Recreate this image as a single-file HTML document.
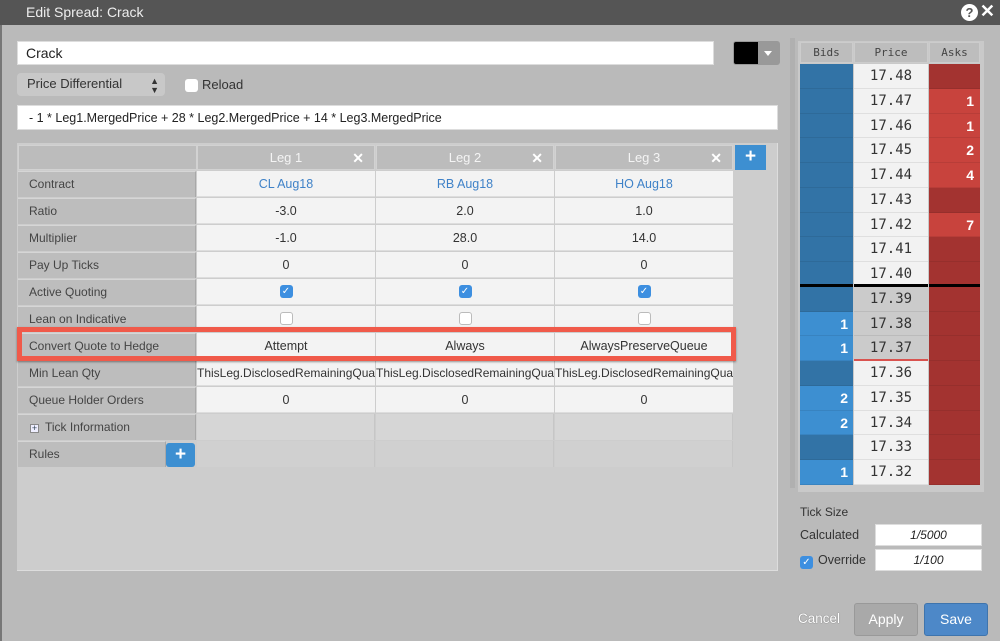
<!DOCTYPE html>
<html><head><meta charset="utf-8"><style>
*{box-sizing:border-box;margin:0;padding:0}
body{width:1000px;height:641px;overflow:hidden;background:#bababa;font-family:"Liberation Sans",Arial,sans-serif;position:relative;color:#333}
.a{position:absolute}
.title{left:0;top:0;width:1000px;height:25px;background:#555;color:#eee;font-size:14px;line-height:25px;padding-left:26px}
.inp{background:#fff;border:1px solid #ddd;font-size:13px;color:#222}
.lbl{position:absolute;left:18px;width:178px;height:26px;background:#bdbdbd;border-top:1px solid #d6d6d6;border-right:1px solid #a8a8a8;font-size:12px;line-height:25px;padding-left:11px;color:#444}
.c{position:absolute;width:178px;height:26px;background:#f3f3f3;border-bottom:1px solid #ddd;font-size:12.5px;line-height:26px;text-align:center;color:#333;overflow:hidden;white-space:nowrap}
.h{position:absolute;top:145px;width:178px;height:25px;background:#bcbcbc;border:1px solid #d2d2d2;color:#f4f4f4;font-size:13px;line-height:24px;text-align:center}
.h b{position:absolute;right:10px;top:0;font-size:14px;color:#fff}
.blue{color:#3f82c8}
.cb{display:inline-block;width:13px;height:13px;border-radius:3px;vertical-align:middle;margin-top:-2px}
.on{background:#3d8fe0;color:#fff;font-size:10px;line-height:13px}
.off{background:#fff;border:1px solid #bbb}
.e{position:absolute;width:178px;height:26px;background:#d6d6d6;border-right:1px solid #c6c6c6}
.lad{position:absolute;height:24.75px;font-size:14px;line-height:24px;font-family:"DejaVu Sans Mono","Liberation Mono",monospace;border-bottom:1px solid rgba(0,0,0,.08)}
.bd{left:800px;width:53px;background:#3273a6;color:#fff;text-align:right;padding-right:5px;font-family:"Liberation Sans",sans-serif;font-weight:bold}
.bl{background:#3d8fd1}
.pr{left:854px;width:74px;background:#f2f2f2;text-align:center;color:#333}
.pg{background:#cbcbcb}
.ak{left:929px;width:51px;background:#a33330;color:#fff;text-align:right;padding-right:6px;font-family:"Liberation Sans",sans-serif;font-weight:bold}
.al{background:#c8433d}
.blk{border-bottom:3px solid #000}
</style></head><body>
<div class="a" style="left:0;top:25px;width:2px;height:616px;background:#777"></div>
<div class="a title">Edit Spread: Crack</div>
<div class="a" style="right:22px;top:4px;width:17px;height:17px;border-radius:50%;background:#fff;color:#555;font-size:13px;font-weight:bold;text-align:center;line-height:17px">?</div>
<div class="a" style="right:5px;top:1px;color:#fff;font-size:18px;font-weight:bold">✕</div>

<div class="a inp" style="left:17px;top:41px;width:697px;height:24px;line-height:22px;padding-left:8px;font-size:14px">Crack</div>
<div class="a" style="left:733px;top:41px;width:47px;height:24px;border:1px solid #999;border-radius:3px;background:#999;overflow:hidden"><div style="width:24px;height:22px;background:#000"></div><div class="a" style="left:30px;top:9px;border:4px solid transparent;border-top:5px solid #fff"></div></div>
<div class="a" style="left:17px;top:73px;width:148px;height:23px;background:#c8c8c8;border-radius:4px;font-size:13px;line-height:22px;padding-left:10px;color:#333">Price Differential<span class="a" style="right:6px;font-size:9px;line-height:9px;top:4px">▲<br>▼</span></div>
<div class="a" style="left:185px;top:79px;width:13px;height:13px;background:#fff;border-radius:3px"></div>
<div class="a" style="left:202px;top:77px;font-size:13px;color:#333">Reload</div>
<div class="a inp" style="left:17px;top:105px;width:761px;height:25px;line-height:24px;padding-left:11px;font-size:12.5px">- 1 * Leg1.MergedPrice + 28 * Leg2.MergedPrice + 14 * Leg3.MergedPrice</div>

<div class="a" style="left:17px;top:143px;width:761px;height:428px;background:#cdcdcd;border-right:1px solid #ddd;border-bottom:1px solid #ddd"></div>
<div class="a" style="left:18px;top:145px;width:179px;height:25px;background:#bcbcbc;border:1px solid #d2d2d2"></div>
<div class="h" style="left:197px">Leg 1<b>✕</b></div>
<div class="h" style="left:376px">Leg 2<b>✕</b></div>
<div class="h" style="left:555px">Leg 3<b>✕</b></div>
<div class="a" style="left:735px;top:145px;width:31px;height:25px;background:#3d8fd1;color:#fff;font-weight:bold;font-size:19px;text-align:center;line-height:24px">+</div>

<div class="lbl" style="top:171px">Contract</div>
<div class="lbl" style="top:198px">Ratio</div>
<div class="lbl" style="top:225px">Multiplier</div>
<div class="lbl" style="top:252px">Pay Up Ticks</div>
<div class="lbl" style="top:279px">Active Quoting</div>
<div class="lbl" style="top:306px">Lean on Indicative</div>
<div class="lbl" style="top:333px">Convert Quote to Hedge</div>
<div class="lbl" style="top:360px">Min Lean Qty</div>
<div class="lbl" style="top:387px">Queue Holder Orders</div>
<div class="lbl" style="top:414px;padding-left:12px"><span style="display:inline-block;width:9px;height:9px;border:1px solid #888;background:#eef;font-size:9px;line-height:7px;text-align:center;color:#345;margin-right:6px">+</span>Tick Information</div>
<div class="lbl" style="top:441px;width:148px">Rules</div>
<div class="a" style="left:166px;top:443px;width:29px;height:24px;background:#3d8fd1;border-radius:3px;color:#fff;font-weight:bold;font-size:19px;text-align:center;line-height:23px">+</div>

<div class="c blue" style="left:197px;top:171px">CL Aug18</div>
<div class="c blue" style="left:376px;top:171px">RB Aug18</div>
<div class="c blue" style="left:555px;top:171px">HO Aug18</div>
<div class="c" style="left:197px;top:198px">-3.0</div><div class="c" style="left:376px;top:198px">2.0</div><div class="c" style="left:555px;top:198px">1.0</div>
<div class="c" style="left:197px;top:225px">-1.0</div><div class="c" style="left:376px;top:225px">28.0</div><div class="c" style="left:555px;top:225px">14.0</div>
<div class="c" style="left:197px;top:252px">0</div><div class="c" style="left:376px;top:252px">0</div><div class="c" style="left:555px;top:252px">0</div>
<div class="c" style="left:197px;top:279px"><span class="cb on">✓</span></div><div class="c" style="left:376px;top:279px"><span class="cb on">✓</span></div><div class="c" style="left:555px;top:279px"><span class="cb on">✓</span></div>
<div class="c" style="left:197px;top:306px"><span class="cb off"></span></div><div class="c" style="left:376px;top:306px"><span class="cb off"></span></div><div class="c" style="left:555px;top:306px"><span class="cb off"></span></div>
<div class="c" style="left:197px;top:333px">Attempt</div><div class="c" style="left:376px;top:333px">Always</div><div class="c" style="left:555px;top:333px">AlwaysPreserveQueue</div>
<div class="c" style="left:197px;top:360px;text-align:left;font-size:12px">ThisLeg.DisclosedRemainingQuantity</div><div class="c" style="left:376px;top:360px;text-align:left;font-size:12px">ThisLeg.DisclosedRemainingQuantity</div><div class="c" style="left:555px;top:360px;text-align:left;font-size:12px">ThisLeg.DisclosedRemainingQuantity</div>
<div class="c" style="left:197px;top:387px">0</div><div class="c" style="left:376px;top:387px">0</div><div class="c" style="left:555px;top:387px">0</div>
<div class="e" style="left:197px;top:414px"></div><div class="e" style="left:376px;top:414px"></div><div class="e" style="left:555px;top:414px"></div>
<div class="e" style="left:197px;top:441px;background:#d0d0d0"></div><div class="e" style="left:376px;top:441px;background:#d0d0d0"></div><div class="e" style="left:555px;top:441px;background:#d0d0d0"></div>
<div class="a" style="left:17px;top:327px;width:719px;height:34px;border:5px solid #f05a4a;box-shadow:0 1px 2px rgba(0,0,0,.4)"></div>

<div class="a" style="left:790px;top:38px;width:5px;height:450px;background:#b0b0b0"></div>
<div class="a" style="left:798px;top:41px;width:186px;height:451px;background:#c9c9c9"></div>
<div class="a" style="left:800px;top:42px;width:53px;height:21px;background:#bdbdbd;border:1px solid #ccc;font-size:11px;text-align:center;line-height:19px;font-family:'DejaVu Sans Mono',monospace;color:#444">Bids</div>
<div class="a" style="left:854px;top:42px;width:74px;height:21px;background:#bdbdbd;border:1px solid #ccc;font-size:11px;text-align:center;line-height:19px;font-family:'DejaVu Sans Mono',monospace;color:#444">Price</div>
<div class="a" style="left:929px;top:42px;width:51px;height:21px;background:#bdbdbd;border:1px solid #ccc;font-size:11px;text-align:center;line-height:19px;font-family:'DejaVu Sans Mono',monospace;color:#444">Asks</div>

<div class="lad bd" style="top:64px"></div><div class="lad pr" style="top:64px">17.48</div><div class="lad ak" style="top:64px"></div>
<div class="lad bd" style="top:88.75px"></div><div class="lad pr" style="top:88.75px">17.47</div><div class="lad ak al" style="top:88.75px">1</div>
<div class="lad bd" style="top:113.5px"></div><div class="lad pr" style="top:113.5px">17.46</div><div class="lad ak al" style="top:113.5px">1</div>
<div class="lad bd" style="top:138.25px"></div><div class="lad pr" style="top:138.25px">17.45</div><div class="lad ak al" style="top:138.25px">2</div>
<div class="lad bd" style="top:163px"></div><div class="lad pr" style="top:163px">17.44</div><div class="lad ak al" style="top:163px">4</div>
<div class="lad bd" style="top:187.75px"></div><div class="lad pr" style="top:187.75px">17.43</div><div class="lad ak" style="top:187.75px"></div>
<div class="lad bd" style="top:212.5px"></div><div class="lad pr" style="top:212.5px">17.42</div><div class="lad ak al" style="top:212.5px">7</div>
<div class="lad bd" style="top:237.25px"></div><div class="lad pr" style="top:237.25px">17.41</div><div class="lad ak" style="top:237.25px"></div>
<div class="lad bd blk" style="top:262px"></div><div class="lad pr blk" style="top:262px">17.40</div><div class="lad ak blk" style="top:262px"></div>
<div class="lad bd" style="top:286.75px"></div><div class="lad pr pg" style="top:286.75px">17.39</div><div class="lad ak" style="top:286.75px"></div>
<div class="lad bd bl" style="top:311.5px">1</div><div class="lad pr pg" style="top:311.5px">17.38</div><div class="lad ak" style="top:311.5px"></div>
<div class="lad bd bl" style="top:336.25px">1</div><div class="lad pr pg" style="top:336.25px;border-bottom:2px solid #d9534f">17.37</div><div class="lad ak" style="top:336.25px"></div>
<div class="lad bd" style="top:361px"></div><div class="lad pr" style="top:361px">17.36</div><div class="lad ak" style="top:361px"></div>
<div class="lad bd bl" style="top:385.75px">2</div><div class="lad pr" style="top:385.75px">17.35</div><div class="lad ak" style="top:385.75px"></div>
<div class="lad bd bl" style="top:410.5px">2</div><div class="lad pr" style="top:410.5px">17.34</div><div class="lad ak" style="top:410.5px"></div>
<div class="lad bd" style="top:435.25px"></div><div class="lad pr" style="top:435.25px">17.33</div><div class="lad ak" style="top:435.25px"></div>
<div class="lad bd bl" style="top:460px">1</div><div class="lad pr" style="top:460px">17.32</div><div class="lad ak" style="top:460px"></div>

<div class="a" style="left:800px;top:505px;font-size:12px;color:#333">Tick Size</div>
<div class="a" style="left:800px;top:528px;font-size:12.5px;color:#333">Calculated</div>
<div class="a inp" style="left:875px;top:524px;width:107px;height:22px;font-style:italic;font-size:12px;line-height:20px;text-align:center">1/5000</div>
<div class="a" style="left:800px;top:556px;width:13px;height:13px;border-radius:3px;background:#3d8fe0;color:#fff;font-size:10px;text-align:center;line-height:13px">✓</div>
<div class="a" style="left:818px;top:553px;font-size:12.5px;color:#333">Override</div>
<div class="a inp" style="left:875px;top:549px;width:107px;height:22px;font-style:italic;font-size:12px;line-height:20px;text-align:center">1/100</div>

<div class="a" style="left:798px;top:611px;font-size:13.5px;color:#fff;text-shadow:0 0 1px #555">Cancel</div>
<div class="a" style="left:854px;top:603px;width:64px;height:33px;background:#a9a9a9;border:1px solid #999;border-radius:3px;color:#fff;font-size:14px;text-align:center;line-height:31px">Apply</div>
<div class="a" style="left:924px;top:603px;width:64px;height:33px;background:#4d88c8;border:1px solid #3e74ad;border-radius:3px;color:#fff;font-size:14px;text-align:center;line-height:31px">Save</div>
</body></html>
